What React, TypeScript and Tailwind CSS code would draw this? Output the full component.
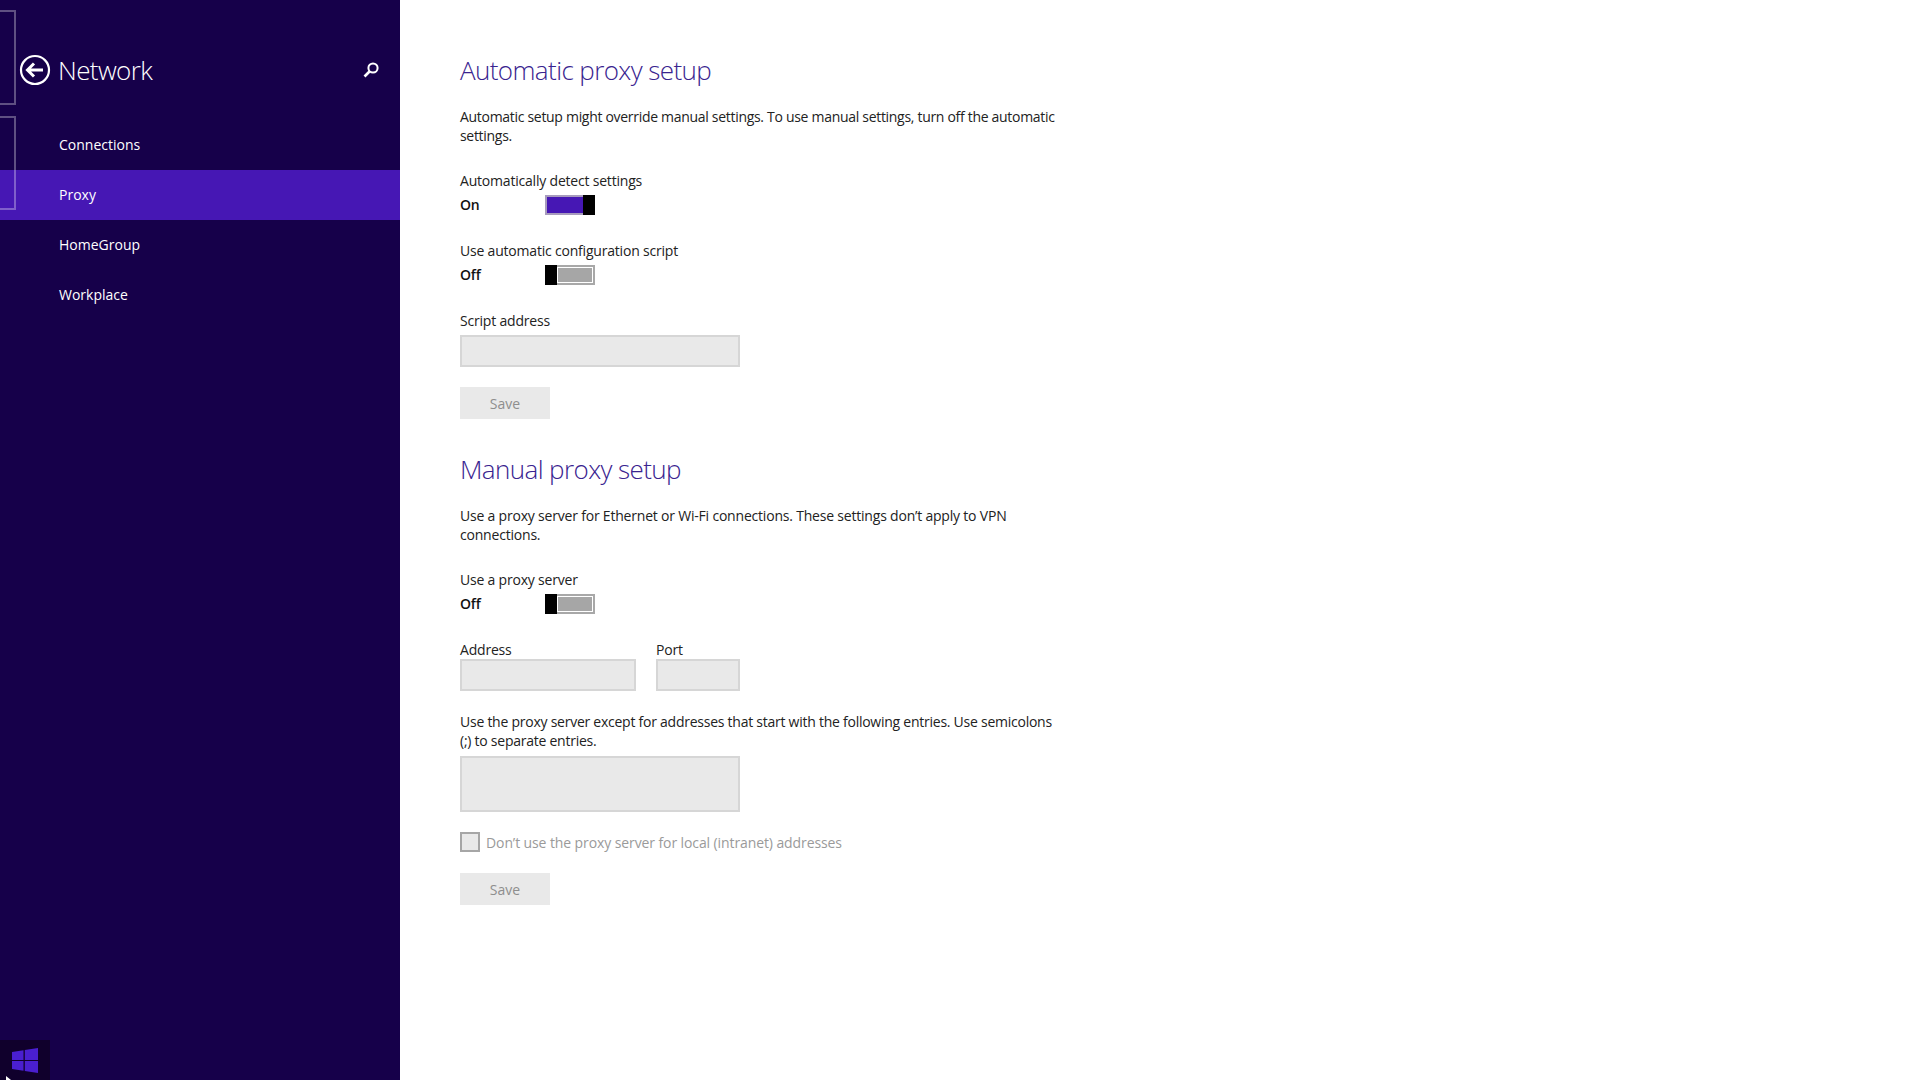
const font = { fontFamily: '"Open Sans", "Noto Sans", sans-serif' };

function Toggle({ on }: { on: boolean }) {
  return (
    <div className={on ? "flex w-[50px] h-[20px] border-2 border-[#a79bbd] border-r-0" : "flex w-[50px] h-[20px] border-2 border-[#a8a8a8] border-l-0"}>
      {on ? (
        <>
          <div className="flex-1 bg-[#4617b4] border-0" />
          <div className="w-[12px] h-[20px] -my-[2px] bg-black" />
        </>
      ) : (
        <>
          <div className="w-[12px] h-[20px] -my-[2px] bg-black" />
          <div className="flex-1 bg-[#a6a6a6] border border-white" />
        </>
      )}
    </div>
  );
}

function ToggleRow({ label, on }: { label: string; on: boolean }) {
  return (
    <div>
      <div className="text-[14px] leading-[19px] text-[#222] tracking-[-0.2px]">{label}</div>
      <div className="flex items-center mt-[5px] h-[20px]">
        <div className="w-[85px] pb-[2px] text-[14px] font-semibold text-[#111] tracking-[-0.2px]">{on ? "On" : "Off"}</div>
        <Toggle on={on} />
      </div>
    </div>
  );
}

function Field({ className }: { className: string }) {
  return <div className={"bg-[#e9e9e9] border-2 border-[#d6d6d6] " + className} />;
}

function SaveButton({ className }: { className: string }) {
  return (
    <div className={"w-[90px] h-[32px] bg-[#e9e9e9] flex items-center justify-center text-[14px] text-[#8e8e8e] " + className}>Save</div>
  );
}

const navItems = ["Connections", "Proxy", "HomeGroup", "Workplace"];

export default function App() {
  return (
    <div className="relative flex w-[1920px] h-[1080px] overflow-hidden bg-white" style={font}>
      <aside className="relative w-[400px] h-full bg-[#16004a] text-white shrink-0">
        <header className="flex items-center h-[50px] mt-[45px] pl-[19px] pr-[20px]">
          <svg width="32" height="32" viewBox="0 0 32 32" fill="none" stroke="white">
            <circle cx="16" cy="16" r="14" strokeWidth="2.2" />
            <path d="M24 16H9M15 9.5 8.5 16l6.5 6.5" strokeWidth="3" />
          </svg>
          <div className="ml-[7px] text-[26px] leading-[36px] font-light tracking-[-0.6px]">Network</div>
          <svg className="ml-auto" width="18" height="18" viewBox="0 0 18 18" fill="none" stroke="white">
            <circle cx="11" cy="7" r="4.6" strokeWidth="2" />
            <path d="M7.5 10.5 2.5 15.5" strokeWidth="2.6" />
          </svg>
        </header>
        <nav className="mt-[25px]">
          {navItems.map((item) => (
            <div
              key={item}
              className={"h-[50px] flex items-center pl-[59px] pb-[2px] text-[14px] " + (item === "Proxy" ? "bg-[#4617b4]" : "")}
            >
              {item}
            </div>
          ))}
        </nav>
        <div className="absolute left-0 top-[10px] w-[16px] h-[95px] border-2 border-l-0 border-[#ffffff50]" />
        <div className="absolute left-0 top-[116px] w-[16px] h-[94px] border-2 border-l-0 border-[#ffffff50]" />
        <div className="absolute left-0 bottom-0 w-[50px] h-[40px] bg-[#10002c] flex items-center justify-center">
          <svg width="26" height="25" viewBox="0 0 26 25" fill="#4a1fd0">
            <path d="M0 4 11.5 2.2V12H0ZM12.8 2 26 0V12H12.8ZM0 13H11.5V22.8L0 21ZM12.8 13H26V25L12.8 23Z" />
          </svg>
        </div>
        <svg className="absolute left-[6px] bottom-0" width="6" height="4" viewBox="0 0 6 4" fill="white">
          <path d="M0 0 5 4H0Z" />
        </svg>
      </aside>

      <main className="pl-[60px] pt-[52px] w-[660px] text-[#222]">
        <h1 className="text-[26px] leading-[36px] font-light text-[#39238f] tracking-[-0.6px]">Automatic proxy setup</h1>
        <p className="mt-[19px] text-[14px] leading-[19px] tracking-[-0.3px]">
          Automatic setup might override manual settings. To use manual settings, turn off the automatic settings.
        </p>
        <div className="mt-[26px]">
          <ToggleRow label="Automatically detect settings" on />
        </div>
        <div className="mt-[26px]">
          <ToggleRow label="Use automatic configuration script" on={false} />
        </div>
        <div className="mt-[26px] text-[14px] leading-[19px] tracking-[-0.2px]">Script address</div>
        <Field className="w-[280px] h-[32px] mt-[5px]" />
        <SaveButton className="mt-[20px]" />

        <h1 className="mt-[32px] text-[26px] leading-[36px] font-light text-[#39238f] tracking-[-0.6px]">Manual proxy setup</h1>
        <p className="mt-[19px] text-[14px] leading-[19px] tracking-[-0.2px]">
          Use a proxy server for Ethernet or Wi-Fi connections. These settings don’t apply to VPN connections.
        </p>
        <div className="mt-[26px]">
          <ToggleRow label="Use a proxy server" on={false} />
        </div>
        <div className="mt-[26px] flex gap-[20px]">
          <div>
            <div className="text-[14px] leading-[19px] tracking-[-0.2px]">Address</div>
            <Field className="w-[176px] h-[32px]" />
          </div>
          <div>
            <div className="text-[14px] leading-[19px] tracking-[-0.2px]">Port</div>
            <Field className="w-[84px] h-[32px]" />
          </div>
        </div>
        <p className="mt-[21px] text-[14px] leading-[19px] tracking-[-0.25px]">
          Use the proxy server except for addresses that start with the following entries. Use semicolons (;) to separate entries.
        </p>
        <Field className="w-[280px] h-[56px] mt-[6px]" />
        <div className="mt-[20px] flex items-center h-[20px]">
          <div className="w-[20px] h-[20px] bg-[#e9e9e9] border-2 border-[#a6a6a6]" />
          <div className="ml-[6px] text-[14px] text-[#9a9a9a] tracking-[-0.1px]">Don’t use the proxy server for local (intranet) addresses</div>
        </div>
        <SaveButton className="mt-[21px]" />
      </main>
    </div>
  );
}
